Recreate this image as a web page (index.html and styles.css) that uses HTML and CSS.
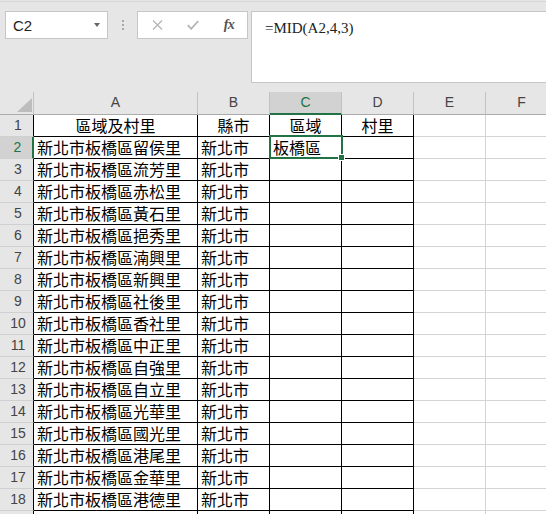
FILE: index.html
```html
<!DOCTYPE html>
<html lang="zh-Hant">
<head>
<meta charset="utf-8">
<title>Excel</title>
<link rel="stylesheet" href="styles.css">
</head>
<body>
<div class="toolbar">
  <div class="namebox"><span>C2</span><span class="caret"></span></div>
  <div class="sep"><i></i><i></i><i></i></div>
  <div class="fxbox">
    <span class="slot"><svg width="11" height="10" viewBox="0 0 11 10"><path d="M1 0.5 L10 9.5 M10 0.5 L1 9.5" stroke="#b5b5b5" stroke-width="1.3" fill="none"/></svg></span>
    <span class="slot"><svg width="12" height="10" viewBox="0 0 12 10"><path d="M0.8 5.2 L4.2 8.8 L11.2 1" stroke="#b5b5b5" stroke-width="1.8" fill="none"/></svg></span>
    <span class="slot fx">fx</span>
  </div>
  <div class="formula">=MID(A2,4,3)</div>
</div>
<div class="sheet">
  <div class="hd corner"><svg width="15" height="14" viewBox="0 0 15 14"><path d="M15 0 L15 14 L0 14 Z" fill="#bdbdbd"/></svg></div>
  <div class="hd">A</div><div class="hd">B</div><div class="hd sel">C</div><div class="hd">D</div><div class="hd">E</div><div class="hd">F</div>

  <div class="rh">1</div><div class="c ctr">區域及村里</div><div class="c ctr">縣市</div><div class="c ctr">區域</div><div class="c ctr">村里</div><div class="g"></div><div class="g"></div>
  <div class="rh sel">2</div><div class="c">新北市板橋區留侯里</div><div class="c">新北市</div><div class="c">板橋區</div><div class="c"></div><div class="g"></div><div class="g"></div>
  <div class="rh">3</div><div class="c">新北市板橋區流芳里</div><div class="c">新北市</div><div class="c"></div><div class="c"></div><div class="g"></div><div class="g"></div>
  <div class="rh">4</div><div class="c">新北市板橋區赤松里</div><div class="c">新北市</div><div class="c"></div><div class="c"></div><div class="g"></div><div class="g"></div>
  <div class="rh">5</div><div class="c">新北市板橋區黃石里</div><div class="c">新北市</div><div class="c"></div><div class="c"></div><div class="g"></div><div class="g"></div>
  <div class="rh">6</div><div class="c">新北市板橋區挹秀里</div><div class="c">新北市</div><div class="c"></div><div class="c"></div><div class="g"></div><div class="g"></div>
  <div class="rh">7</div><div class="c">新北市板橋區湳興里</div><div class="c">新北市</div><div class="c"></div><div class="c"></div><div class="g"></div><div class="g"></div>
  <div class="rh">8</div><div class="c">新北市板橋區新興里</div><div class="c">新北市</div><div class="c"></div><div class="c"></div><div class="g"></div><div class="g"></div>
  <div class="rh">9</div><div class="c">新北市板橋區社後里</div><div class="c">新北市</div><div class="c"></div><div class="c"></div><div class="g"></div><div class="g"></div>
  <div class="rh">10</div><div class="c">新北市板橋區香社里</div><div class="c">新北市</div><div class="c"></div><div class="c"></div><div class="g"></div><div class="g"></div>
  <div class="rh">11</div><div class="c">新北市板橋區中正里</div><div class="c">新北市</div><div class="c"></div><div class="c"></div><div class="g"></div><div class="g"></div>
  <div class="rh">12</div><div class="c">新北市板橋區自強里</div><div class="c">新北市</div><div class="c"></div><div class="c"></div><div class="g"></div><div class="g"></div>
  <div class="rh">13</div><div class="c">新北市板橋區自立里</div><div class="c">新北市</div><div class="c"></div><div class="c"></div><div class="g"></div><div class="g"></div>
  <div class="rh">14</div><div class="c">新北市板橋區光華里</div><div class="c">新北市</div><div class="c"></div><div class="c"></div><div class="g"></div><div class="g"></div>
  <div class="rh">15</div><div class="c">新北市板橋區國光里</div><div class="c">新北市</div><div class="c"></div><div class="c"></div><div class="g"></div><div class="g"></div>
  <div class="rh">16</div><div class="c">新北市板橋區港尾里</div><div class="c">新北市</div><div class="c"></div><div class="c"></div><div class="g"></div><div class="g"></div>
  <div class="rh">17</div><div class="c">新北市板橋區金華里</div><div class="c">新北市</div><div class="c"></div><div class="c"></div><div class="g"></div><div class="g"></div>
  <div class="rh">18</div><div class="c">新北市板橋區港德里</div><div class="c">新北市</div><div class="c"></div><div class="c"></div><div class="g"></div><div class="g"></div>
  <div class="rh"></div><div class="c"></div><div class="c"></div><div class="c"></div><div class="c"></div><div class="g"></div><div class="g"></div>

  <div class="selection"><span class="handle"></span></div>
</div>
</body>
</html>
```

FILE: styles.css
```css
html, body {
  margin: 0;
  padding: 0;
}
body {
  background: #e6e6e6;
  width: 546px;
  height: 514px;
  overflow: hidden;
}
.toolbar {
  display: flex;
  align-items: flex-start;
  box-sizing: border-box;
  height: 91px;
  margin-top: 1px;
  border-top: 1px solid #d6d6d6;
  padding-top: 9px;
}
.namebox {
  box-sizing: border-box;
  margin-left: 5px;
  width: 103px;
  height: 28px;
  border: 1px solid #c6c6c6;
  background: #fff;
  display: flex;
  align-items: center;
  justify-content: space-between;
  padding: 0 7px 0 7px;
  font: 15px "Liberation Sans", Arial, sans-serif;
  color: #222;
}
.caret {
  width: 0;
  height: 0;
  border-left: 3.5px solid transparent;
  border-right: 3.5px solid transparent;
  border-top: 4px solid #666;
}
.sep {
  width: 29px;
  display: flex;
  flex-direction: column;
  align-items: center;
  gap: 2px;
  padding-top: 9px;
}
.sep i {
  display: block;
  width: 2px;
  height: 2px;
  background: #a8a8a8;
}
.fxbox {
  box-sizing: border-box;
  width: 111px;
  height: 28px;
  border: 1px solid #c6c6c6;
  background: #fff;
  display: flex;
  align-items: center;
  padding-left: 1px;
}
.slot {
  width: 36px;
  display: flex;
  justify-content: center;
  align-items: center;
}
.fx {
  font: italic bold 14px "Liberation Serif", serif;
  color: #555;
  letter-spacing: -0.5px;
}
.formula {
  flex: 1;
  box-sizing: border-box;
  margin-left: 3px;
  height: 72px;
  border: 1px solid #c6c6c6;
  border-right: none;
  background: #fff;
  padding: 6px 0 0 13px;
  font: 15px/20px "Liberation Serif", "Times New Roman", serif;
  color: #222;
}
.sheet {
  position: relative;
  display: grid;
  grid-template-columns: 34px 164px repeat(5, 72px);
  grid-template-rows: 23px;
  grid-auto-rows: 22px;
  width: max-content;
  background: #fff;
}
.sheet > div {
  box-sizing: border-box;
  border-right: 1px solid #000;
  border-bottom: 1px solid #000;
  white-space: nowrap;
}
.sheet > .hd {
  background: #e6e6e6;
  border-right-color: #c2c2c2;
  border-bottom-color: #ababab;
  font: 14px/20px "Liberation Sans", Arial, sans-serif;
  color: #444;
  text-align: center;
}
.sheet > .hd.sel {
  background: #d2d2d2;
  color: #217346;
  border-bottom: 2px solid #217346;
}
.corner {
  display: flex;
  align-items: flex-end;
  justify-content: flex-end;
  padding: 0 1px 2px 0;
}
.corner svg {
  display: block;
}
.sheet > .rh {
  background: #e6e6e6;
  border-bottom-color: #d0d0d0;
  border-right-color: #000;
  font: 14px/21px "Liberation Sans", Arial, sans-serif;
  color: #444;
  text-align: center;
  padding-left: 3px;
}
.sheet > .rh.sel {
  background: #d2d2d2;
  color: #217346;
  border-right: 2px solid #217346;
}
.c {
  font: 16px/21px "Noto Sans CJK TC", "Noto Sans CJK SC", sans-serif;
  color: #000;
  padding-left: 3px;
}
.c.ctr {
  text-align: center;
  padding-left: 0;
}
.sheet > .g {
  border-right-color: #d4d4d4;
  border-bottom-color: #d4d4d4;
}
.sheet > .selection {
  position: absolute;
  left: 269px;
  top: 43px;
  width: 74px;
  height: 24px;
  border: 2px solid #217346;
}
.handle {
  position: absolute;
  right: -4px;
  bottom: -4px;
  width: 5px;
  height: 5px;
  background: #217346;
  border: 1px solid #fff;
}
```
